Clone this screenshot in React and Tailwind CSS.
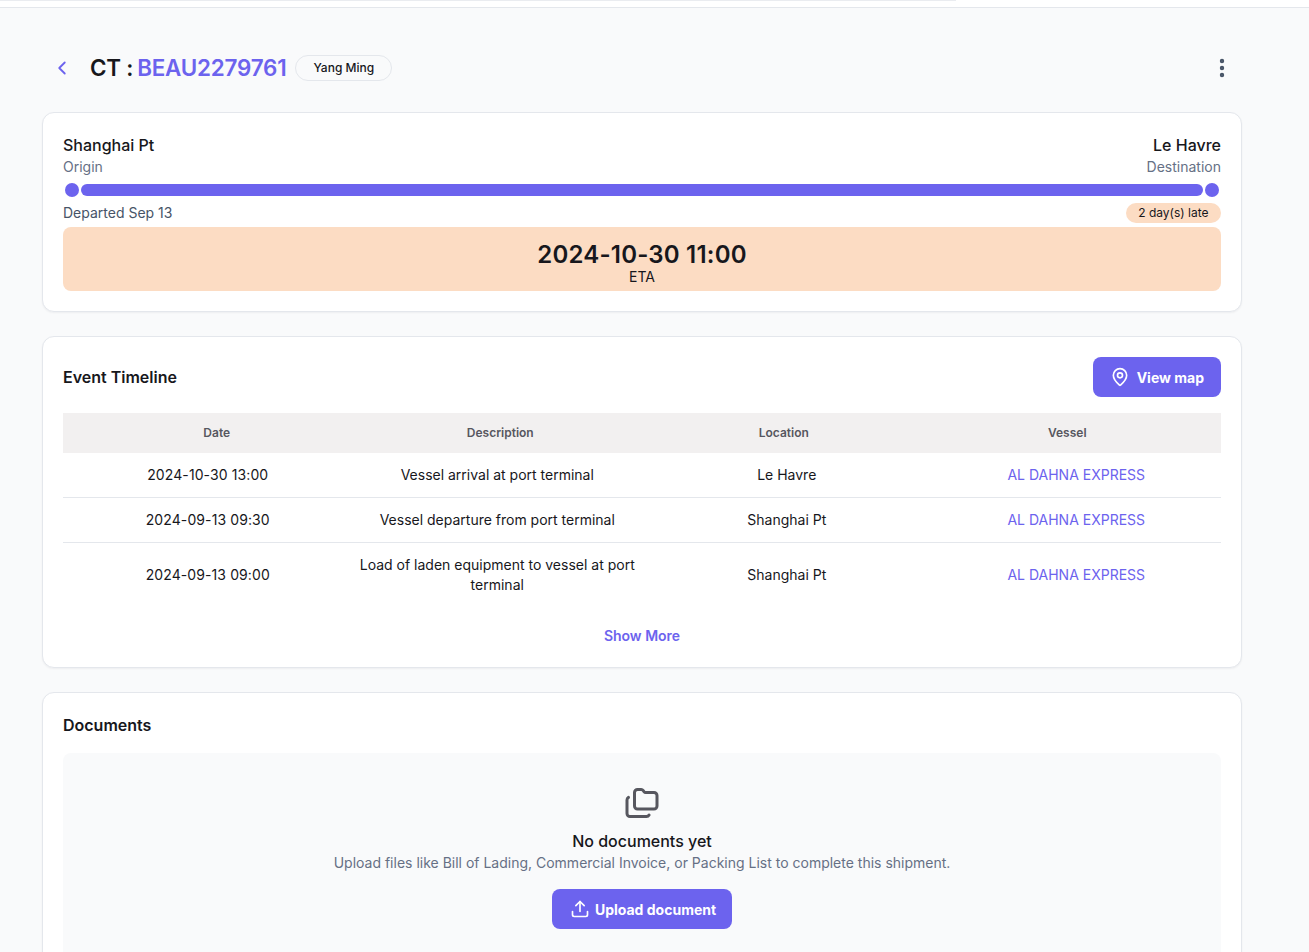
import { ChevronLeft, EllipsisVertical, MapPin, Upload, Folders } from "lucide-react";

const events = [
  { date: "2024-10-30 13:00", description: "Vessel arrival at port terminal", location: "Le Havre", vessel: "AL DAHNA EXPRESS" },
  { date: "2024-09-13 09:30", description: "Vessel departure from port terminal", location: "Shanghai Pt", vessel: "AL DAHNA EXPRESS" },
  { date: "2024-09-13 09:00", description: "Load of laden equipment to vessel at port terminal", location: "Shanghai Pt", vessel: "AL DAHNA EXPRESS" },
];

const Card = ({ className, children }) => (
  <section className={`rounded-xl border border-[#e4e7ec] bg-white p-5 shadow-[0_1px_2px_rgba(16,24,40,0.05)] ${className}`}>
    {children}
  </section>
);

const App = () => {
  return (
    <div className="h-screen overflow-hidden bg-[#f9fafb] font-['Inter',sans-serif] text-[#17171c]">
      {/* Top strip */}
      <div className="h-2 border-b border-[#e4e7ec] bg-white">
        <div className="h-px w-[956px] bg-[#eaecf0]"></div>
      </div>

      <div className="w-[1200px] ml-[42px] pt-[47px]">
        {/* Header */}
        <header className="flex h-[26px] items-center justify-between">
          <div className="flex items-center">
            <ChevronLeft className="ml-[9px] h-[22px] w-[22px] text-[#6c63ee]" strokeWidth={2} />
            <h1 className="ml-[17px] text-[22.4px] font-semibold leading-8 tracking-[-0.2px]">
              CT : <span className="-ml-[1.5px] text-[#6c63ee]">BEAU2279761</span>
            </h1>
            <span className="ml-[9px] flex h-[26px] items-center rounded-full border border-[#e4e7ec] px-[17px] text-xs font-medium">
              Yang Ming
            </span>
          </div>
          <EllipsisVertical className="mr-2 h-6 w-6 text-[#475467]" strokeWidth={2.4} />
        </header>

        {/* Route */}
        <Card className="mt-[31px] h-[200px]">
          <div className="flex justify-between">
            <div>
              <p className="text-base font-medium leading-6">Shanghai Pt</p>
              <p className="text-sm leading-5 text-[#667085]">Origin</p>
            </div>
            <div className="text-right">
              <p className="text-base font-medium leading-6">Le Havre</p>
              <p className="text-sm leading-5 text-[#667085]">Destination</p>
            </div>
          </div>
          <div className="mt-[6px] flex h-[14px] items-center gap-[2px] px-[2px]">
            <span className="h-[14px] w-[14px] shrink-0 rounded-full bg-[#6c63ee]"></span>
            <div className="h-3 flex-1 rounded-full bg-[#6c63ee]"></div>
            <span className="h-[14px] w-[14px] shrink-0 rounded-full bg-[#6c63ee]"></span>
          </div>
          <div className="mt-[6px] flex h-5 items-center justify-between">
            <span className="text-sm text-[#475467]">Departed Sep 13</span>
            <span className="flex h-5 items-center rounded-full bg-[#fcdcc3] px-[12.5px] text-xs">2 day(s) late</span>
          </div>
          <div className="mt-1 flex h-16 flex-col items-center justify-center rounded-lg bg-[#fcdcc3] pt-2">
            <p className="text-2xl font-semibold leading-7 tracking-[0.2px]">2024-10-30 11:00</p>
            <p className="text-sm leading-4 text-[#17171c]">ETA</p>
          </div>
        </Card>

        {/* Event timeline */}
        <Card className="mt-6 h-[332px]">
          <div className="flex h-10 items-center justify-between">
            <h2 className="text-base font-semibold">Event Timeline</h2>
            <button className="flex h-10 items-center gap-[7px] rounded-lg bg-[#6c63ee] px-[17px] text-sm font-bold text-white">
              <MapPin className="h-5 w-5" strokeWidth={2} />
              <span className="pt-[2px]">View map</span>
            </button>
          </div>
          <div className="mt-4 grid h-10 grid-cols-4 items-center bg-[#f2f0f0] px-3 text-center text-xs font-semibold text-[#57575f]">
            <span>Date</span>
            <span>Description</span>
            <span>Location</span>
            <span>Vessel</span>
          </div>
          {events.map((ev, i) => (
            <div
              key={ev.date}
              className={`grid grid-cols-4 items-center text-center text-sm ${i < 2 ? "h-[45px] border-b border-[#e4e7ec]" : "h-[64px]"}`}
            >
              <span className="tracking-[0.1px]">{ev.date}</span>
              <span className="px-1">{ev.description}</span>
              <span>{ev.location}</span>
              <span className="text-[#6c63ee]">{ev.vessel}</span>
            </div>
          ))}
          <p className="mt-[19px] text-center text-sm font-semibold text-[#6c63ee]">Show More</p>
        </Card>

        {/* Documents */}
        <Card className="mt-6 h-[400px]">
          <h2 className="text-base font-semibold leading-6">Documents</h2>
          <div className="mt-4 flex flex-col items-center rounded-lg bg-[#f9fafb] pt-[32px] pb-8">
            <Folders className="h-9 w-9 text-[#57575f]" strokeWidth={2} />
            <p className="mt-2 text-base font-medium leading-6">No documents yet</p>
            <p className="text-sm leading-5 text-[#667085]">
              Upload files like Bill of Lading, Commercial Invoice, or Packing List to complete this shipment.
            </p>
            <button className="mt-4 flex h-10 items-center gap-[5px] rounded-lg bg-[#6c63ee] pl-[18px] pr-4 text-sm font-bold text-white">
              <Upload className="h-5 w-5" strokeWidth={2} />
              <span className="pt-[2px]">Upload document</span>
            </button>
          </div>
        </Card>
      </div>
    </div>
  );
};

export default App;
